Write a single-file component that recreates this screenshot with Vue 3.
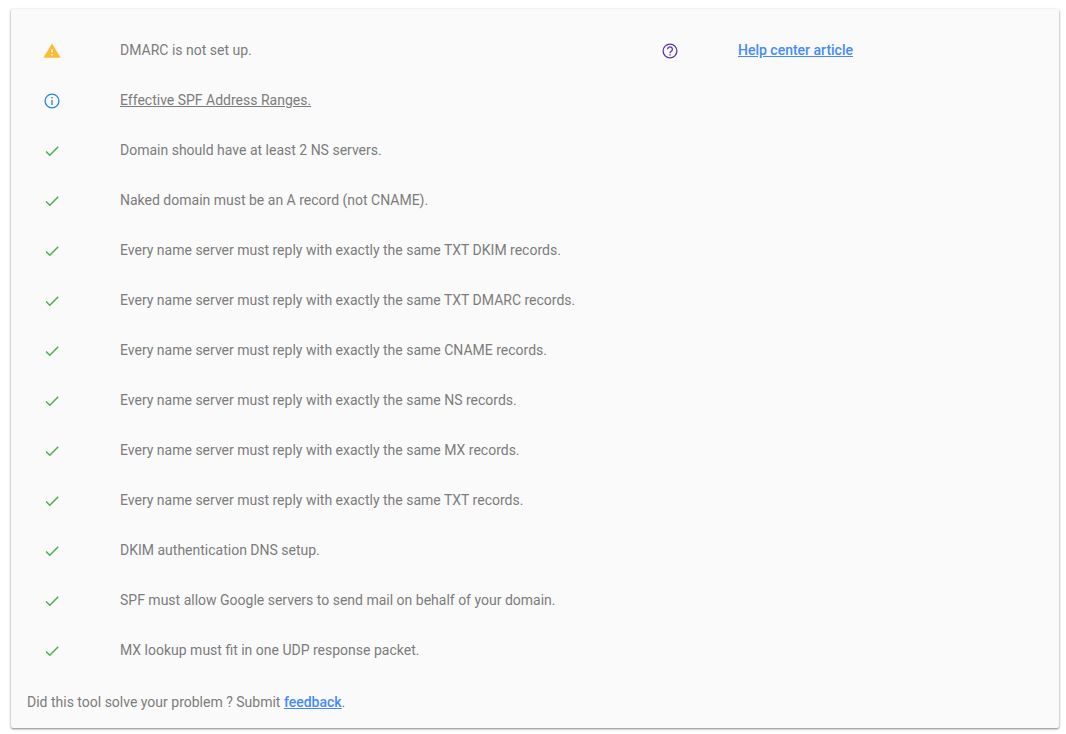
<script setup>
const checks = [
  { kind: 'warning', text: 'DMARC is not set up.', help: true },
  { kind: 'info', text: 'Effective SPF Address Ranges.', link: true },
  { kind: 'ok', text: 'Domain should have at least 2 NS servers.' },
  { kind: 'ok', text: 'Naked domain must be an A record (not CNAME).' },
  { kind: 'ok', text: 'Every name server must reply with exactly the same TXT DKIM records.' },
  { kind: 'ok', text: 'Every name server must reply with exactly the same TXT DMARC records.' },
  { kind: 'ok', text: 'Every name server must reply with exactly the same CNAME records.' },
  { kind: 'ok', text: 'Every name server must reply with exactly the same NS records.' },
  { kind: 'ok', text: 'Every name server must reply with exactly the same MX records.' },
  { kind: 'ok', text: 'Every name server must reply with exactly the same TXT records.' },
  { kind: 'ok', text: 'DKIM authentication DNS setup.' },
  { kind: 'ok', text: 'SPF must allow Google servers to send mail on behalf of your domain.' },
  { kind: 'ok', text: 'MX lookup must fit in one UDP response packet.' },
]
const icons = {
  warning: 'M.5 21h23L12 2 .5 21zm12.5-3h-2v-2h2v2zm0-4h-2v-4h2v4z',
  ok: 'M9 16.17L4.83 12l-1.42 1.41L9 19 21 7l-1.41-1.41z',
}
</script>

<template>
  <main class="card">
    <ul class="checks">
      <li v-for="check in checks" :key="check.text" class="check">
        <svg v-if="check.kind === 'info'" class="icon info" viewBox="0 0 18 18" aria-hidden="true">
          <circle cx="9" cy="9" r="6.900" />
          <path d="M9 8v5M9 5v1.500" />
        </svg>
        <svg v-else class="icon" :class="check.kind" viewBox="0 0 24 24" aria-hidden="true">
          <path :d="icons[check.kind]" />
        </svg>
        <a v-if="check.link" class="ranges" href="#">{{ check.text }}</a>
        <span v-else>{{ check.text }}</span>
        <template v-if="check.help">
          <svg class="icon help" viewBox="0 0 18 18" aria-hidden="true">
            <circle cx="9" cy="9" r="6.900" />
            <path d="M6.600 7.300a2.400 2.400 0 1 1 3.800 1.900c-.8.6-1.400 1-1.400 2M9 12.200v1.300" />
          </svg>
          <a class="link" href="#">Help center article</a>
        </template>
      </li>
    </ul>
    <p class="feedback">Did this tool solve your problem ? Submit <a class="link" href="#">feedback</a>.</p>
  </main>
</template>

<style>
body {
  background: #fff;
}
</style>

<style scoped>
.card {
  margin: 9px 7px 6px 11px;
  padding: 16px;
  border-radius: 2px;
  background: #fafafa;
  box-shadow: 0 1px 3px rgba(0, 0, 0, 0.24), 0 1px 2px rgba(0, 0, 0, 0.3);
  font: 14px/20px Roboto, sans-serif;
  color: #7c7c7c;
}
.checks {
  margin: 0;
  padding: 0;
  list-style: none;
}
.check {
  display: grid;
  grid-template-columns: 77px 541px 77px 1fr;
  align-items: center;
  height: 50px;
  padding-left: 16px;
}
.check > span,
.ranges,
.check > .link {
  justify-self: start;
}
.ranges {
  color: inherit;
}
.icon {
  width: 18px;
  height: 18px;
  margin-top: 2px;
}
.warning {
  fill: #fbbc34;
}
.info,
.help {
  fill: none;
  stroke-width: 1.3;
}
.info {
  stroke: #1e82f0;
}
.ok {
  fill: #4caf50;
}
.help {
  stroke: #5e30b0;
}
.link {
  color: #448aff;
  font-weight: 500;
}
.feedback {
  margin: 17px 0 0;
}
</style>
